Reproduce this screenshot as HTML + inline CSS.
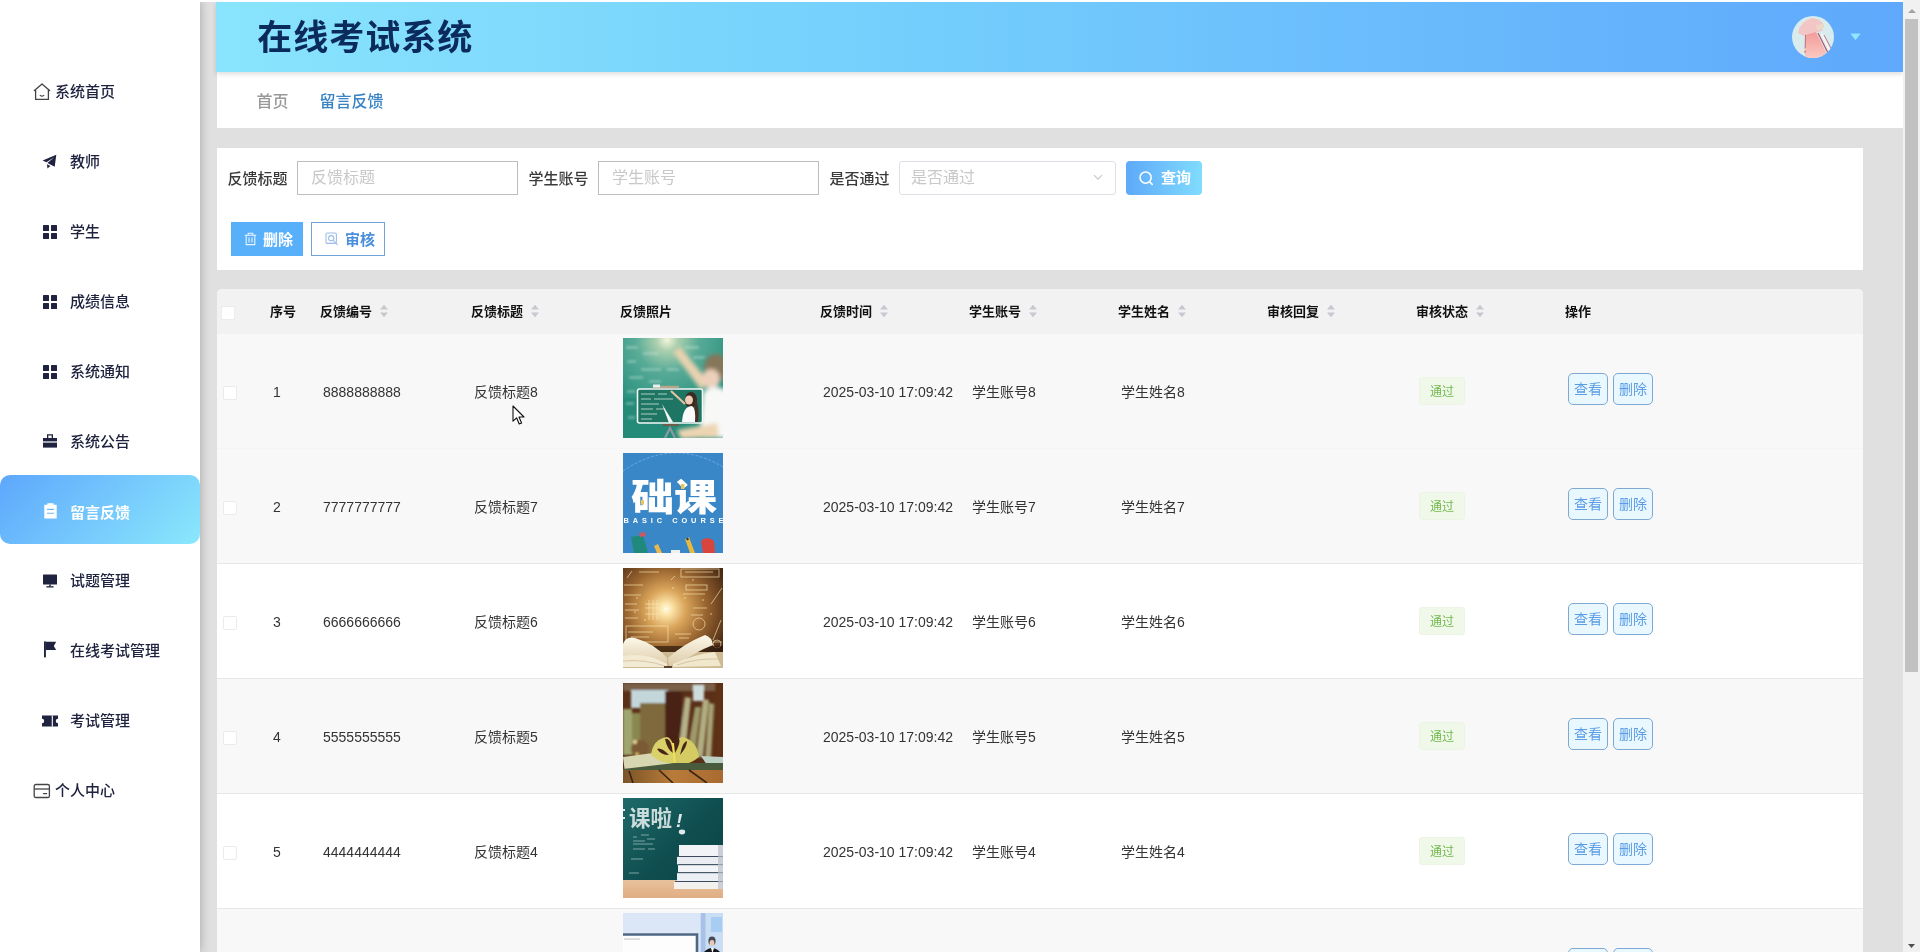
<!DOCTYPE html>
<html lang="zh-CN"><head><meta charset="utf-8"><title>在线考试系统</title>
<style>
*{box-sizing:border-box;margin:0;padding:0}
html,body{width:1920px;height:952px;overflow:hidden}
body{position:relative;will-change:transform;background:#e0e0e0;font-family:"Liberation Sans","Noto Sans CJK SC",sans-serif;color:#333;font-size:14px}
.abs{position:absolute}
.t{position:absolute;white-space:nowrap}
#side{position:absolute;left:0;top:0;width:200px;height:952px;background:#fff;box-shadow:0 0 10px rgba(0,0,0,.28)}
#topstrip{position:absolute;left:0;top:0;width:1920px;height:2px;background:#fff;z-index:5}
.mi{position:absolute;left:0;width:200px;height:69.8px;line-height:69.8px;font-size:15px;font-weight:500;color:#20233f}
.mi .tx{position:absolute;left:70px;top:0;white-space:nowrap}
.mi.top .tx{left:55px}
.mi svg{position:absolute}
.mi.act{background:linear-gradient(135deg,#5ea7fc 0%,#8ae8fc 100%);border-radius:10px;color:#fff;font-weight:bold}
#hdr{position:absolute;left:216px;top:2px;width:1687px;height:70px;background:linear-gradient(90deg,#89e4fd 0%,#74cffc 40%,#5fa8fc 100%);box-shadow:0 2px 5px rgba(0,0,0,.14);z-index:3}
#title{position:absolute;left:41.3px;top:1.2px;height:70px;line-height:70px;font-size:35px;letter-spacing:1px;font-weight:bold;color:#0b2b5c;white-space:nowrap}
#crumb{position:absolute;left:216.5px;top:72px;width:1686.5px;height:56px;background:#fff}
#search{position:absolute;left:217px;top:147.6px;width:1646px;height:122.8px;background:#fff}
#tbl{position:absolute;left:217px;top:289.4px;width:1646px;height:663px;background:#fff;border-radius:5px 5px 0 0;overflow:hidden}
.lab{position:absolute;top:14.4px;height:34px;line-height:34px;font-size:15px;font-weight:500;color:#3a3a3a;margin-left:-.5px;white-space:nowrap}
.inp{position:absolute;top:13.6px;height:34px;border:1px solid #bdbdbd;background:#fff;font-size:16px;line-height:31px;color:#c8c8c8;padding-left:13px;white-space:nowrap}
.btn{position:absolute;height:34px;line-height:34px;font-size:15px;font-weight:bold;white-space:nowrap}
.th{position:absolute;top:0;height:44px;line-height:45px;font-size:13px;font-weight:bold;color:#111;white-space:nowrap}
.row{position:absolute;left:0;width:1646px;height:115px;border-bottom:1px solid #e6e6e6}
.row.g{background:#f8f8f8}
.c{position:absolute;top:1px;height:115px;line-height:115px;font-size:14px;color:#333;white-space:nowrap}
.cb{position:absolute;width:14px;height:14px;background:#fff;border:1px solid #ebebeb;border-radius:2px}
.tag{position:absolute;left:1202px;top:43px;width:46px;height:28px;line-height:28px;text-align:center;font-size:12px;color:#72b84e;background:#f0f8ea;border:1px solid #ecf5e5;border-radius:3px}
.ob{position:absolute;top:39px;width:40px;height:32px;line-height:31px;text-align:center;font-size:14px;color:#5a9de6;background:#e9f7ff;border:1px solid #7ea9d2;border-radius:5px}
.img{position:absolute;left:406px;top:4px;width:100px;height:100px;overflow:hidden}
.sort{position:absolute;top:15px;width:10px;height:14px}
</style></head>
<body>
<div id="side">
<div class="mi top" style="top:56.6px"><svg style="left:33px;top:26px" width="18" height="18" viewBox="0 0 18 18"><path d="M1.4 7.6 L9 1 L16.6 7.6 M2.6 6.8 V16.4 H15.4 V6.8" fill="none" stroke="#444" stroke-width="1.3" stroke-linejoin="round" stroke-linecap="round"/><path d="M7.2 12.4 Q9 14 10.8 12.4" fill="none" stroke="#444" stroke-width="1.2" stroke-linecap="round"/></svg><span class="tx">系统首页</span></div>
<div class="mi" style="top:127.0px"><svg style="left:42px;top:27px" width="16" height="16" viewBox="0 0 16 16"><path d="M0.6 6.4 L14.3 0.7 L12.7 12.8 L5.4 8.9 L12.2 3.2 L4.4 8.2 Z M5 10.2 L8.4 12 L5.4 14.4 Z" fill="#20233f"/></svg><span class="tx">教师</span></div>
<div class="mi" style="top:197.0px"><svg style="left:43px;top:28px" width="14" height="14" viewBox="0 0 14 14"><rect x="0" y="0" width="6" height="6" rx=".6" fill="#20233f"/><rect x="8" y="0" width="6" height="6" rx=".6" fill="#20233f"/><rect x="0" y="8" width="6" height="6" rx=".6" fill="#20233f"/><rect x="8" y="8" width="6" height="6" rx=".6" fill="#20233f"/></svg><span class="tx">学生</span></div>
<div class="mi" style="top:267.0px"><svg style="left:43px;top:28px" width="14" height="14" viewBox="0 0 14 14"><rect x="0" y="0" width="6" height="6" rx=".6" fill="#20233f"/><rect x="8" y="0" width="6" height="6" rx=".6" fill="#20233f"/><rect x="0" y="8" width="6" height="6" rx=".6" fill="#20233f"/><rect x="8" y="8" width="6" height="6" rx=".6" fill="#20233f"/></svg><span class="tx">成绩信息</span></div>
<div class="mi" style="top:337.0px"><svg style="left:43px;top:28px" width="14" height="14" viewBox="0 0 14 14"><rect x="0" y="0" width="6" height="6" rx=".6" fill="#20233f"/><rect x="8" y="0" width="6" height="6" rx=".6" fill="#20233f"/><rect x="0" y="8" width="6" height="6" rx=".6" fill="#20233f"/><rect x="8" y="8" width="6" height="6" rx=".6" fill="#20233f"/></svg><span class="tx">系统通知</span></div>
<div class="mi" style="top:407.0px"><svg style="left:43px;top:26px" width="14" height="16" viewBox="0 0 14 16"><path d="M4 5 V1.2 H10 V5 H8.7 V2.6 H5.3 V5 Z" fill="#20233f"/><rect x="0" y="5" width="14" height="3.4" fill="#20233f"/><rect x="0" y="9.6" width="14" height="5" fill="#20233f"/></svg><span class="tx">系统公告</span></div>
<div class="mi act" style="top:475.2px;height:68.8px"><svg style="left:44px;top:28px" width="13" height="16" viewBox="0 0 13 16"><path d="M0.3 1.8 H3.4 V0.2 H9.6 V1.8 H12.7 V15.4 H0.3 Z" fill="#fff"/><path d="M3 6.4 H10 M3 10.2 H10" stroke="#6db8fb" stroke-width="1.1"/></svg><span class="tx" style="top:2.4px">留言反馈</span></div>
<div class="mi" style="top:546.0px"><svg style="left:43px;top:28px" width="14" height="14" viewBox="0 0 14 14"><rect x="0" y="0.5" width="14" height="10" rx=".6" fill="#20233f"/><rect x="6.2" y="10.5" width="1.6" height="2" fill="#20233f"/><rect x="3.4" y="12.2" width="7.2" height="1.3" fill="#20233f"/></svg><span class="tx">试题管理</span></div>
<div class="mi" style="top:616.0px"><svg style="left:43px;top:25px" width="14" height="17" viewBox="0 0 14 17"><rect x="1" y="0.4" width="1.9" height="16" fill="#20233f"/><path d="M2.8 0.8 H13.2 L10.8 4.9 L13.2 9 H2.8 Z" fill="#20233f"/></svg><span class="tx">在线考试管理</span></div>
<div class="mi" style="top:686.0px"><svg style="left:42px;top:29px" width="16" height="12" viewBox="0 0 16 12"><path d="M0 0.5 H16 V3.8 A2.2 2.2 0 0 0 16 8.2 V11.5 H0 V8.2 A2.2 2.2 0 0 0 0 3.8 Z" fill="#20233f"/><path d="M10.3 0.5 V11.5" stroke="#fff" stroke-width="1.1"/></svg><span class="tx">考试管理</span></div>
<div class="mi top" style="top:756.0px"><svg style="left:33px;top:27px" width="18" height="16" viewBox="0 0 18 16"><rect x="1.2" y="1.5" width="15.2" height="13" rx="1.6" fill="none" stroke="#444" stroke-width="1.3"/><path d="M1.2 6 H16.4" stroke="#444" stroke-width="1.3"/><path d="M10.5 10.6 H13.6" stroke="#444" stroke-width="1.3" stroke-linecap="round"/></svg><span class="tx">个人中心</span></div>
</div>
<div id="topstrip"></div>
<div id="hdr"><div id="title">在线考试系统</div>
<svg class="abs" style="left:1576px;top:14px" width="42" height="42" viewBox="0 0 42 42"><defs><clipPath id="av"><circle cx="21" cy="21" r="21"/></clipPath><linearGradient id="avg" x1="0" y1="0" x2="0" y2="1"><stop offset="0" stop-color="#f49a9b"/><stop offset="1" stop-color="#f9c9c0"/></linearGradient><filter id="avb"><feGaussianBlur stdDeviation=".7"/></filter></defs><g clip-path="url(#av)"><rect width="42" height="42" fill="#d8ecee"/><g filter="url(#avb)"><path d="M6 17 Q8 5 20 2 Q30 3 32 10 L30 15 L22 17 L12 20 Z" fill="#f3c6c6"/><path d="M24 9 L32 8 L31 13 L25 14 Z" fill="#e9d9c6"/><path d="M13 19 L24 16 L34 36 L33 42 H13 Z" fill="url(#avg)"/><path d="M26 17 L36 37" stroke="#a8506a" stroke-width="1.1"/><path d="M29.5 18 L39 37" stroke="#fdf3f3" stroke-width="2"/><path d="M32 19 L41 36" stroke="#b76a80" stroke-width=".9"/><path d="M13.5 19 L13 37" stroke="#b9707c" stroke-width="1"/><path d="M6 36 L14 33" stroke="#f6e2d8" stroke-width="1.6"/></g></g></svg>
<svg class="abs" style="left:1634px;top:31px" width="11" height="8" viewBox="0 0 11 8"><path d="M0.3 0.6 H10.7 L5.5 7.2 Z" fill="#93e4fd"/></svg>
</div>
<div id="crumb"><span class="t" style="left:40px;top:1px;height:56px;line-height:57px;font-size:16px;color:#999;font-weight:500">首页</span><span class="t" style="left:103px;top:1px;height:56px;line-height:57px;font-size:16px;color:#3a84c6;font-weight:500">留言反馈</span></div>
<div id="search">
<span class="lab" style="left:11px">反馈标题</span><div class="inp" style="left:80px;width:221px">反馈标题</div>
<span class="lab" style="left:312px">学生账号</span><div class="inp" style="left:381px;width:221px">学生账号</div>
<span class="lab" style="left:613px">是否通过</span><div class="inp" style="left:682px;width:217px;border-color:#dcdfe6;border-radius:3px;padding-left:11px">是否通过<svg class="abs" style="left:193px;top:12px" width="10" height="7" viewBox="0 0 10 7"><path d="M1 1.2 L5 5.2 L9 1.2" fill="none" stroke="#c6c9d0" stroke-width="1.2"/></svg></div>
<div class="btn" style="left:909px;top:13.6px;width:76px;color:#fff;background:linear-gradient(90deg,#5ea9f9,#80dcfd);border-radius:4px"><svg class="abs" style="left:12px;top:9px" width="16" height="16" viewBox="0 0 16 16"><circle cx="7.6" cy="7.6" r="5.6" fill="none" stroke="#fff" stroke-width="1.5"/><path d="M11.6 11.8 L14.2 14.4" stroke="#fff" stroke-width="1.6" stroke-linecap="round"/></svg><span class="t" style="left:35px;top:0">查询</span></div>
<div class="btn" style="left:14px;top:74.6px;width:72px;color:#fff;background:#58b0fb"><svg class="abs" style="left:13px;top:10px" width="13" height="14" viewBox="0 0 13 14"><path d="M0.8 3.2 H12.2 M4.2 3 V1.2 H8.8 V3 M2.2 3.4 V12.6 H10.8 V3.4 M5 5.6 V10.4 M8 5.6 V10.4" fill="none" stroke="#e6f4ff" stroke-width="1.1"/></svg><span class="t" style="left:32px;top:.5px">删除</span></div>
<div class="btn" style="left:94px;top:74.6px;width:74px;color:#4a8fdc;background:#fff;border:1px solid #6fa5dc;line-height:32px"><svg class="abs" style="left:13px;top:9px" width="14" height="14" viewBox="0 0 14 14"><rect x="1" y="1" width="10.4" height="10.4" rx="1.4" fill="none" stroke="#9dbde6" stroke-width="1.1"/><circle cx="6.2" cy="6.2" r="2.6" fill="none" stroke="#9dbde6" stroke-width="1.1"/><path d="M8.2 8.4 L12.6 12.8" stroke="#9dbde6" stroke-width="1.2"/></svg><span class="t" style="left:33px;top:.5px">审核</span></div>
</div>
<div id="tbl">
<div class="abs" style="left:0;top:0;width:1646px;height:44.6px;background:#f2f2f2"></div>
<div class="cb" style="left:4px;top:17px;border-color:#ececec"></div>
<span class="th" style="left:53px">序号</span>
<span class="th" style="left:103px">反馈编号</span>
<svg class="sort" style="left:162px" viewBox="0 0 10 14"><path d="M5 0.8 L9 5.6 H1 Z M5 13.2 L9 8.4 H1 Z" fill="#c6c9cf"/></svg>
<span class="th" style="left:254px">反馈标题</span>
<svg class="sort" style="left:313px" viewBox="0 0 10 14"><path d="M5 0.8 L9 5.6 H1 Z M5 13.2 L9 8.4 H1 Z" fill="#c6c9cf"/></svg>
<span class="th" style="left:403px">反馈照片</span>
<span class="th" style="left:603px">反馈时间</span>
<svg class="sort" style="left:662px" viewBox="0 0 10 14"><path d="M5 0.8 L9 5.6 H1 Z M5 13.2 L9 8.4 H1 Z" fill="#c6c9cf"/></svg>
<span class="th" style="left:752px">学生账号</span>
<svg class="sort" style="left:811px" viewBox="0 0 10 14"><path d="M5 0.8 L9 5.6 H1 Z M5 13.2 L9 8.4 H1 Z" fill="#c6c9cf"/></svg>
<span class="th" style="left:901px">学生姓名</span>
<svg class="sort" style="left:960px" viewBox="0 0 10 14"><path d="M5 0.8 L9 5.6 H1 Z M5 13.2 L9 8.4 H1 Z" fill="#c6c9cf"/></svg>
<span class="th" style="left:1050px">审核回复</span>
<svg class="sort" style="left:1109px" viewBox="0 0 10 14"><path d="M5 0.8 L9 5.6 H1 Z M5 13.2 L9 8.4 H1 Z" fill="#c6c9cf"/></svg>
<span class="th" style="left:1199px">审核状态</span>
<svg class="sort" style="left:1258px" viewBox="0 0 10 14"><path d="M5 0.8 L9 5.6 H1 Z M5 13.2 L9 8.4 H1 Z" fill="#c6c9cf"/></svg>
<span class="th" style="left:1348px">操作</span>
<div class="row g" style="top:44.6px;border-bottom-color:#f5f5f5">
<div class="cb" style="left:6px;top:52px"></div>
<span class="c" style="left:56px">1</span><span class="c" style="left:106px">8888888888</span><span class="c" style="left:257px">反馈标题8</span>
<div class="img"><svg width="100" height="100" viewBox="0 0 100 100"><defs><radialGradient id="i1a" cx="44%" cy="2%" r="70%"><stop offset="0" stop-color="#f4f4d8"/><stop offset=".16" stop-color="#a9cfae"/><stop offset=".45" stop-color="#58ab97"/><stop offset="1" stop-color="#2a917f"/></radialGradient><filter id="b1"><feGaussianBlur stdDeviation="2"/></filter><filter id="b1s"><feGaussianBlur stdDeviation="1"/></filter></defs><rect width="100" height="100" fill="url(#i1a)"/><rect x="0" y="60" width="100" height="40" fill="#1f8775" opacity=".55"/><g fill="#cfe9df" opacity=".33" filter="url(#b1s)"><rect x="3" y="8" width="12" height="3"/><rect x="20" y="14" width="16" height="3"/><rect x="4" y="22" width="9" height="3"/><rect x="18" y="30" width="20" height="3"/><rect x="6" y="38" width="14" height="3"/><rect x="26" y="42" width="12" height="3"/><rect x="62" y="8" width="14" height="3"/><rect x="70" y="18" width="12" height="3"/><rect x="4" y="52" width="8" height="3"/><rect x="3" y="64" width="8" height="3"/><rect x="5" y="78" width="7" height="3"/><rect x="44" y="30" width="12" height="3"/></g><g filter="url(#b1)"><path d="M50 14 L57 9 L86 44 L78 52 Z" fill="#e9d2b0"/><ellipse cx="93" cy="30" rx="12" ry="14" fill="#86775a"/><ellipse cx="88" cy="41" rx="9" ry="10" fill="#ecd0bb"/><path d="M80 54 Q92 44 106 54 V100 H76 Z" fill="#f8f8f6"/><path d="M54 92 L94 85 L96 99 L58 101 Z" fill="#edd5b2"/></g><rect x="14.5" y="51" width="65" height="34" rx="2" fill="#1f7563" stroke="#f4f8f6" stroke-width="1.6"/><g stroke="#cfe6dc" stroke-width="1" opacity=".8"><path d="M18 56 H32 M35 56 H44 M18 61 H28 M31 61 H50 M18 66 H36 M18 71 H30 M33 71 H42 M18 76 H34 M18 81 H29"/></g><path d="M39 66 L50 84 L46 85 Z" fill="#f2f6f4"/><path d="M48 53 L62 66" stroke="#e3c2a2" stroke-width="2.2"/><path d="M30 49 H56" stroke="#b9a58e" stroke-width="2.4"/><rect x="30" y="46.5" width="7" height="3" fill="#e8f2ee"/><ellipse cx="68" cy="62" rx="6" ry="8" fill="#3b2a22"/><ellipse cx="66" cy="62" rx="4" ry="4.6" fill="#f0cdb6"/><path d="M72 58 Q77 70 75 84 H71 Z" fill="#4a3024"/><path d="M59 84 Q60 68 69 68 Q73 70 72 84 Z" fill="#fbfbfb"/><path d="M40 87 H56" stroke="#6f5a48" stroke-width="2.2"/><path d="M42 100 L47 90 L52 100" stroke="#8b9aa0" stroke-width="2.2" fill="none"/></svg></div>
<span class="c" style="left:606px">2025-03-10 17:09:42</span><span class="c" style="left:755px">学生账号8</span><span class="c" style="left:904px">学生姓名8</span>
<div class="tag">通过</div><div class="ob" style="left:1351px">查看</div><div class="ob" style="left:1396px">删除</div>
</div>
<div class="row g" style="top:159.6px">
<div class="cb" style="left:6px;top:52px"></div>
<span class="c" style="left:56px">2</span><span class="c" style="left:106px">7777777777</span><span class="c" style="left:257px">反馈标题7</span>
<div class="img"><svg width="100" height="100" viewBox="0 0 100 100"><rect width="100" height="100" fill="#3a87c8"/><path d="M0 18 Q50 -16 100 14" fill="none" stroke="#7fb6e2" stroke-width=".7" stroke-dasharray="3 1.5"/><text x="8" y="58" font-family="'Liberation Sans','Noto Sans CJK SC',sans-serif" font-weight="900" font-size="37" fill="#fff" textLength="86" lengthAdjust="spacingAndGlyphs">础课</text><rect x="58" y="31" width="3.4" height="5" fill="#e9c65a"/><rect x="18" y="47" width="3" height="4.6" fill="#e9c65a"/><text x="0.4" y="69.8" font-family="'Liberation Sans',sans-serif" font-weight="bold" font-size="7.4" fill="#fff" letter-spacing="3.95">BASIC COURSE</text><path d="M8 84 L20 82 L25 100 H11 Z" fill="#1f8a7c"/><path d="M16 80 L22 79 L23 83 L17 84 Z" fill="#c95a63"/><path d="M31 93 L35 91 L39 100 H34 Z" fill="#e8b84c"/><path d="M62 86 L66 84 L72 100 H67 Z" fill="#e9b840"/><path d="M63 85.6 L65 84.4 L66 86.6 L64 87.4 Z" fill="#2b3c4c"/><path d="M78 88 Q84 82 91 88 L92 100 H80 Z" fill="#d8453f"/><rect x="48" y="97" width="9" height="3" fill="#eef1ef"/></svg></div>
<span class="c" style="left:606px">2025-03-10 17:09:42</span><span class="c" style="left:755px">学生账号7</span><span class="c" style="left:904px">学生姓名7</span>
<div class="tag">通过</div><div class="ob" style="left:1351px">查看</div><div class="ob" style="left:1396px">删除</div>
</div>
<div class="row" style="top:274.6px">
<div class="cb" style="left:6px;top:52px"></div>
<span class="c" style="left:56px">3</span><span class="c" style="left:106px">6666666666</span><span class="c" style="left:257px">反馈标题6</span>
<div class="img"><svg width="100" height="100" viewBox="0 0 100 100"><defs><radialGradient id="i3a" cx="43%" cy="41%" r="66%"><stop offset="0" stop-color="#fffbe6"/><stop offset=".1" stop-color="#fbe2a4"/><stop offset=".3" stop-color="#d9a45a"/><stop offset=".6" stop-color="#9a6630"/><stop offset="1" stop-color="#4a2a14"/></radialGradient><linearGradient id="i3b" x1="0" y1="0" x2="0" y2="1"><stop offset="0" stop-color="#fdf8ea"/><stop offset="1" stop-color="#dccba8"/></linearGradient></defs><rect width="100" height="100" fill="url(#i3a)"/><g fill="none" stroke="#fbe6b4" stroke-width=".8" opacity=".8"><rect x="58" y="1" width="38" height="8"/><rect x="3" y="58" width="42" height="16"/><rect x="63" y="17" width="21" height="5"/><circle cx="76" cy="56" r="6"/><circle cx="94" cy="76" r="4"/><path d="M1 17 H20 M1 27 H18 M2 36 H14 M60 26 H82 M2 42 H16 M2 50 H15 M90 72 L98 52 M88 36 L99 20 M52 66 H68 M16 4 H36 M4 10 L9 3 M68 47 H80 M70 40 H84 M22 46 H40 M26 32 V52 M30 32 V52 M34 32 V52 M22 36 H40 M22 40 H40"/><path d="M90 74 L99 74 M5 64 H30 M8 69 H26 M62 4 H90 M48 12 L52 8 M56 70 H66"/></g><g fill="#ffe9b0" opacity=".8"><circle cx="12" cy="44" r=".8"/><circle cx="22" cy="52" r=".8"/><circle cx="62" cy="30" r=".8"/><circle cx="80" cy="32" r=".8"/><circle cx="70" cy="12" r=".8"/><circle cx="88" cy="46" r=".8"/><circle cx="14" cy="30" r=".8"/><circle cx="50" cy="20" r=".8"/></g><path d="M0 78 H100 V84 H0 Z" fill="#2a180c" opacity=".7"/><rect x="0" y="84" width="100" height="16" fill="#cdb992"/><path d="M0 76 Q3 68 12 70 Q32 76 44 90 L44 98 L0 98 Z" fill="url(#i3b)"/><path d="M45 90 Q60 76 82 67 Q89 69 90 77 Q72 84 56 96 L46 98 Z" fill="url(#i3b)"/><path d="M50 96 Q72 86 92 84 L98 98 L50 99 Z" fill="#f1e7cc"/><path d="M0 88 Q24 84 44 96 L44 99 L0 99 Z" fill="#f3ead4"/><path d="M0 93 Q22 91 42 98 M54 97 Q74 90 95 91" stroke="#c9b68e" stroke-width=".7" fill="none"/><path d="M41 99 H49" stroke="#3a2615" stroke-width="1.6"/></svg></div>
<span class="c" style="left:606px">2025-03-10 17:09:42</span><span class="c" style="left:755px">学生账号6</span><span class="c" style="left:904px">学生姓名6</span>
<div class="tag">通过</div><div class="ob" style="left:1351px">查看</div><div class="ob" style="left:1396px">删除</div>
</div>
<div class="row g" style="top:389.6px">
<div class="cb" style="left:6px;top:52px"></div>
<span class="c" style="left:56px">4</span><span class="c" style="left:106px">5555555555</span><span class="c" style="left:257px">反馈标题5</span>
<div class="img"><svg width="100" height="100" viewBox="0 0 100 100"><defs><filter id="b4"><feGaussianBlur stdDeviation="1.3"/></filter><linearGradient id="i4w" x1="0" y1="0" x2="1" y2="0"><stop offset="0" stop-color="#7a5428"/><stop offset=".5" stop-color="#b97b3a"/><stop offset="1" stop-color="#a86a30"/></linearGradient></defs><rect width="100" height="100" fill="#5a2f18"/><g filter="url(#b4)"><rect x="0" y="0" width="100" height="8" fill="#7a6046"/><rect x="8" y="7" width="37" height="18" fill="#c3d6da"/><rect x="70" y="2" width="11" height="16" fill="#cfdcdc"/><rect x="0" y="26" width="9" height="46" fill="#9ea56e"/><rect x="9" y="30" width="8" height="42" fill="#8a8850"/><rect x="17" y="20" width="25" height="52" fill="#7f6a3c"/><rect x="42" y="8" width="17" height="62" fill="#4a2412"/><path d="M62 14 L68 15 L63 62 L56 62 Z" fill="#b4b088"/><path d="M72 24 L78 24 L72 70 L64 70 Z" fill="#9c9a6a"/><path d="M80 16 L86 17 L80 74 L73 74 Z" fill="#b0ad80"/><path d="M86 20 L91 21 L88 76 L82 76 Z" fill="#a8a276"/><rect x="92" y="0" width="8" height="74" fill="#5e3218"/><ellipse cx="17" cy="66" rx="9" ry="9" fill="#7a5a34"/><circle cx="12" cy="59" r="2" fill="#f0d9a0"/><circle cx="14" cy="71" r="1.6" fill="#f1d070"/></g><path d="M0 74 L30 70 L52 80 L2 90 Z" fill="#d7d6b0"/><path d="M78 73 L100 74 V82 L84 82 Z" fill="#bcd0c4"/><path d="M28 72 Q30 56 44 54 Q52 56 52 80 Q40 82 28 72 Z" fill="#d9d16a"/><path d="M52 80 Q50 54 60 54 Q74 58 76 74 Q64 84 52 80 Z" fill="#d4cc62"/><path d="M42 56 Q48 54 50 70 Q44 66 42 56 Z M52 70 Q50 54 56 55 Q58 60 52 70 Z M57 72 Q60 58 64 58 Q64 64 57 72 Z M34 66 Q38 64 46 72 Q38 72 34 66 Z" fill="#4a2618"/><path d="M50 60 L52 82" stroke="#f0e052" stroke-width="2"/><path d="M0 86 L52 80 L100 80 V88 H0 Z" fill="#4a5a3c"/><rect x="0" y="87" width="100" height="13" fill="url(#i4w)"/><path d="M6 88 L10 100 M36 87 L50 100 M66 87 L84 100" stroke="#3c2412" stroke-width="1.6"/></svg></div>
<span class="c" style="left:606px">2025-03-10 17:09:42</span><span class="c" style="left:755px">学生账号5</span><span class="c" style="left:904px">学生姓名5</span>
<div class="tag">通过</div><div class="ob" style="left:1351px">查看</div><div class="ob" style="left:1396px">删除</div>
</div>
<div class="row" style="top:504.6px">
<div class="cb" style="left:6px;top:52px"></div>
<span class="c" style="left:56px">5</span><span class="c" style="left:106px">4444444444</span><span class="c" style="left:257px">反馈标题4</span>
<div class="img"><svg width="100" height="100" viewBox="0 0 100 100"><defs><linearGradient id="i5a" x1="0" y1="0" x2="1" y2="1"><stop offset="0" stop-color="#1f6a6a"/><stop offset=".5" stop-color="#0f4e50"/><stop offset="1" stop-color="#0b4244"/></linearGradient><linearGradient id="i5b" x1="0" y1="0" x2="0" y2="1"><stop offset="0" stop-color="#e8c19c"/><stop offset="1" stop-color="#e0ad82"/></linearGradient></defs><rect width="100" height="100" fill="url(#i5a)"/><rect x="0" y="82" width="100" height="18" fill="url(#i5b)"/><text x="6" y="28" font-family="'Liberation Sans','Noto Sans CJK SC',sans-serif" font-weight="bold" font-size="21.5" fill="#dfeaea" opacity=".9">课啦</text><path d="M0 12 H2 M0 20 H2" stroke="#dfeaea" stroke-width="2"/><text x="53" y="29" font-family="'Liberation Sans',sans-serif" font-style="italic" font-weight="bold" font-size="19" fill="#dfeaea">!</text><ellipse cx="59" cy="34" rx="3.2" ry="2.4" fill="#dfeaea"/><g stroke="#b9d0d0" stroke-width=".8" opacity=".8"><path d="M10 39 H14 M18 37 H26 M10 43 H22 M24 41 H32 M10 46 H30 M10 51 H22 M25 51 H32 M8 61 H20 M6 75 H16"/></g><g><rect x="56" y="47" width="44" height="11" fill="#f1f3f6"/><rect x="54" y="59" width="46" height="7.5" fill="#e9ecf0"/><rect x="55" y="67" width="45" height="7.5" fill="#f2f4f7"/><rect x="54" y="75" width="46" height="8" fill="#eceff3"/><rect x="51" y="84" width="49" height="7" fill="#f3f1ee"/><path d="M54 58.5 H100 M55 66.7 H100 M54 74.7 H100 M52 83.5 H100" stroke="#3b4a5e" stroke-width="1"/><rect x="95" y="47" width="5" height="44" fill="#b9bfca" opacity=".7"/></g></svg></div>
<span class="c" style="left:606px">2025-03-10 17:09:42</span><span class="c" style="left:755px">学生账号4</span><span class="c" style="left:904px">学生姓名4</span>
<div class="tag">通过</div><div class="ob" style="left:1351px">查看</div><div class="ob" style="left:1396px">删除</div>
</div>
<div class="row g" style="top:619.6px">
<div class="cb" style="left:6px;top:52px"></div>
<span class="c" style="left:56px">6</span><span class="c" style="left:106px">3333333333</span><span class="c" style="left:257px">反馈标题3</span>
<div class="img"><svg width="100" height="100" viewBox="0 0 100 100"><rect width="100" height="100" fill="#dbe7f7"/><rect x="77" y="0" width="23" height="100" fill="#c9def5"/><rect x="78" y="0" width="4.5" height="100" fill="#a9c1e6"/><rect x="88" y="4" width="11" height="15" fill="#a8cdf3"/><rect x="0" y="20" width="74" height="80" fill="#fdfdfd"/><path d="M0 21.5 H74 V100" fill="none" stroke="#4d6684" stroke-width="2.6"/><rect x="1" y="25.5" width="16" height="1.2" fill="#c9c9c9"/><ellipse cx="89" cy="28" rx="3.6" ry="4.4" fill="#4a4a52"/><ellipse cx="89" cy="30" rx="2.4" ry="3" fill="#e9c9b6"/><path d="M80 40 Q89 30 98 40 V60 H80 Z" fill="#15181e"/><path d="M88 35 L89.4 40 L91 35 Z" fill="#fff"/></svg></div>
<span class="c" style="left:606px">2025-03-10 17:09:42</span><span class="c" style="left:755px">学生账号3</span><span class="c" style="left:904px">学生姓名3</span>
<div class="tag">通过</div><div class="ob" style="left:1351px">查看</div><div class="ob" style="left:1396px">删除</div>
</div>
</div>
<svg class="abs" style="left:512px;top:405px;z-index:9" width="14" height="21" viewBox="0 0 14 21"><path d="M1 1 V16.2 L4.6 12.8 L7.2 19 L9.6 18 L7 12 H12 Z" fill="#fff" stroke="#111" stroke-width="1.1" stroke-linejoin="round"/></svg>
<div class="abs" style="left:1903px;top:0;width:17px;height:952px;background:#f1f1f1;z-index:6"></div>
<div class="abs" style="left:1905px;top:19px;width:13px;height:653px;background:#c1c1c1;z-index:7"></div>
<svg class="abs" style="left:1907.5px;top:8.5px;z-index:7" width="8" height="4" viewBox="0 0 8 4"><path d="M4 0 L8 4 H0 Z" fill="#a3a3a3"/></svg>
<svg class="abs" style="left:1908px;top:943.5px;z-index:7" width="7" height="4" viewBox="0 0 7 4"><path d="M3.5 4 L7 0 H0 Z" fill="#505050"/></svg>
</body></html>
